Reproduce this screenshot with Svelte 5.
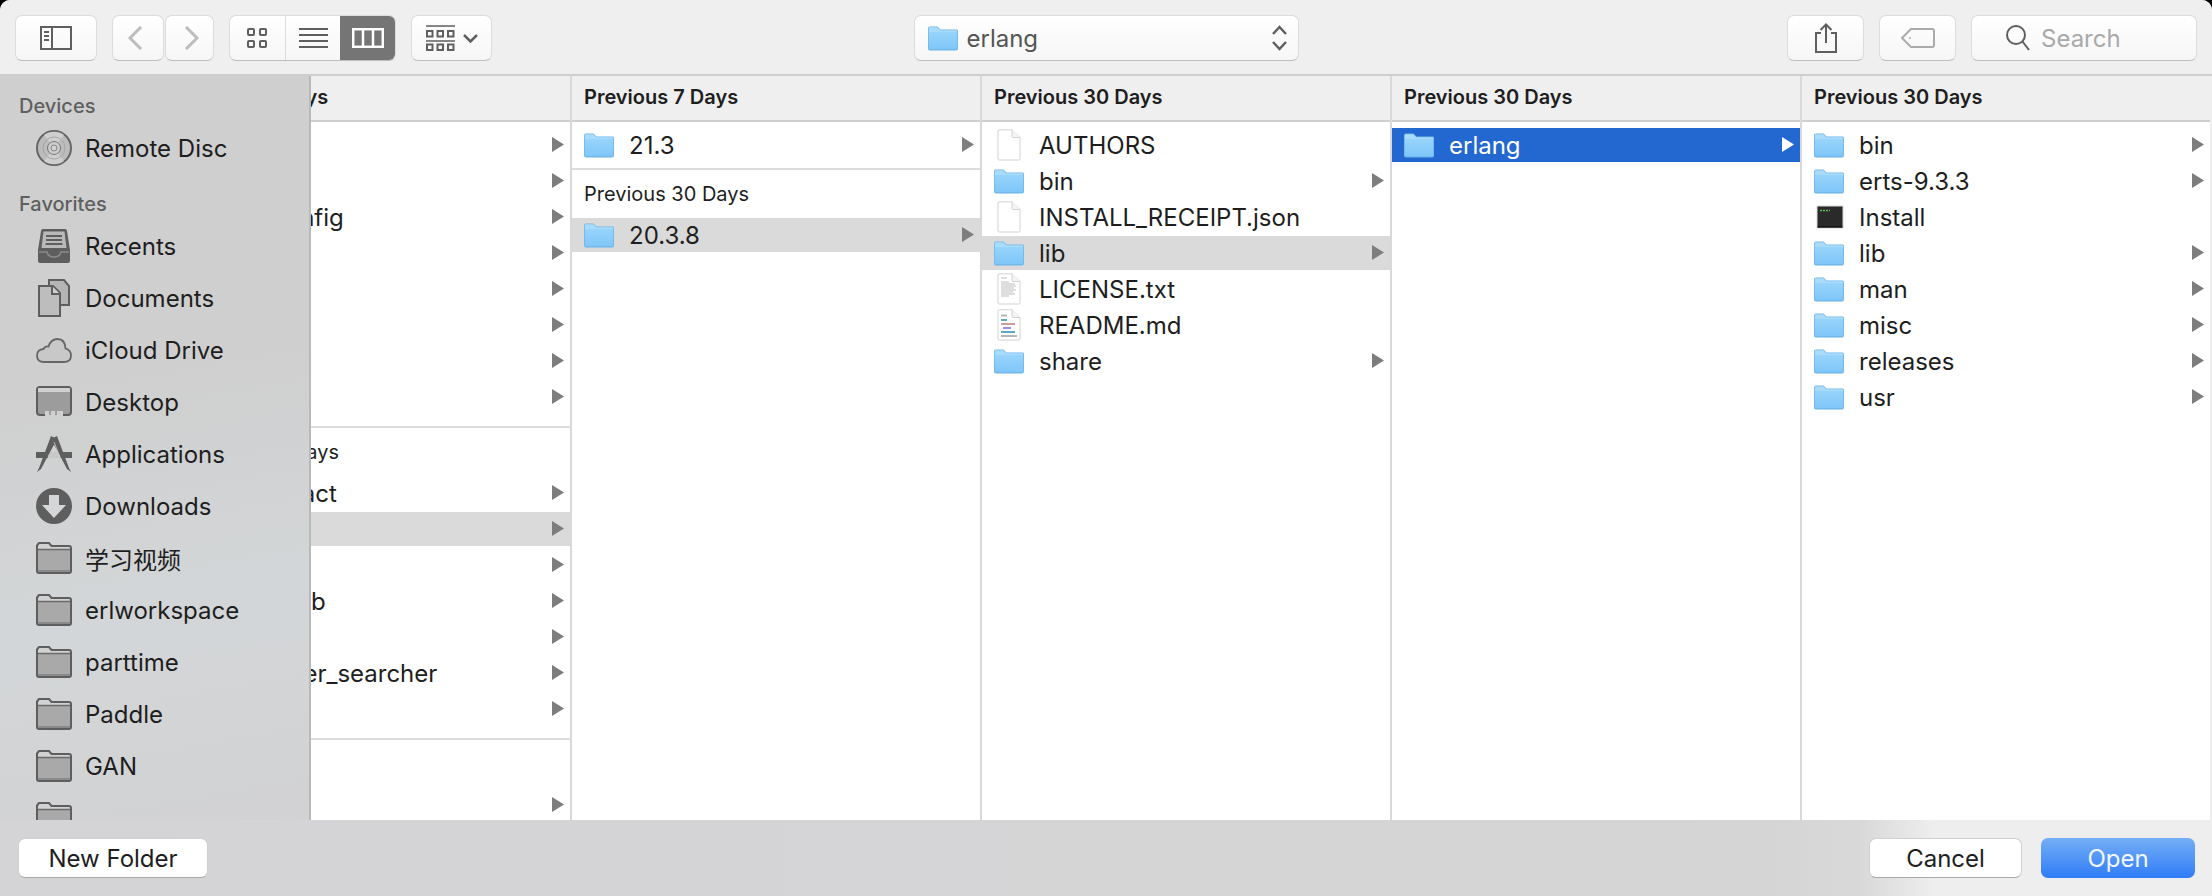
<script>
  // rows of the column browser; arrow is derived from kind === "folder"
  const F = "folder";
  const col1 = [
    { rows: [["ant", F], ["bison", F], ["pkg-config", F], ["cmake", F], ["gcc", F], ["go", F], ["wget", F], ["yarn", F]] },
    { title: "Previous 30 Days", rows: [["git-extract", F], ["erlang", F, "sel"], ["gdb", F], ["rethinkdb", F], ["lua", F], ["the_silver_searcher", F], ["vim", F]] },
    { title: "Earlier", rows: [["zsh", F]] }
  ];
  const col2 = [
    { rows: [["21.3", F]] },
    { title: "Previous 30 Days", rows: [["20.3.8", F, "sel"]] }
  ];
  const col3 = [
    ["AUTHORS", "file"], ["bin", F], ["INSTALL_RECEIPT.json", "file"], ["lib", F, "sel"],
    ["LICENSE.txt", "text"], ["README.md", "readme"], ["share", F]
  ];
  const col5 = [
    ["bin", F], ["erts-9.3.3", F], ["Install", "term"], ["lib", F], ["man", F], ["misc", F], ["releases", F], ["usr", F]
  ];
  const favorites = [
    ["Recents", "recents"], ["Documents", "docs"], ["iCloud Drive", "cloud"], ["Desktop", "desktop"],
    ["Applications", "apps"], ["Downloads", "downloads"], ["学习视频", "gfolder"], ["erlworkspace", "gfolder"],
    ["parttime", "gfolder"], ["Paddle", "gfolder"], ["GAN", "gfolder"], ["", "gfolder"]
  ];
</script>

{#snippet fileIcon(kind)}
  {#if kind === "folder"}
    <svg class="ico" width="30" height="25" viewBox="0 0 30 25">
      <defs>
        <linearGradient id="fb" x1="0" y1="0" x2="0" y2="1"><stop offset="0" stop-color="#97d4fb" /><stop offset="1" stop-color="#7fc6f9" /></linearGradient>
      </defs>
      <path d="M0 2.5Q0 .5 2 .5H9.5L12.5 3.5H29Q30 3.500 30 5V22.500Q30 24.500 28 24.500H2Q0 24.500 0 22.500Z" fill="#6fb6e8" />
      <path d="M.8 2.600Q.8 1.300 2 1.300H9.200L12.200 4.300H29.200V6H.8Z" fill="#a9dcfc" />
      <rect x=".8" y="6" width="28.400" height="17.200" fill="url(#fb)" />
    </svg>
  {:else if kind === "term"}
    <svg class="ico" width="28" height="24" viewBox="0 0 28 24">
      <rect x=".5" y=".5" width="27" height="23" fill="#d8d8d8" />
      <rect x="1.500" y="1.500" width="25" height="21" fill="#2a2a2a" />
      <rect x="1.500" y="21.500" width="25" height="1" fill="#000" />
      <path d="M4 5.500h2M7 5.500h2M10 5.500h2M13 5.500h1" stroke="#62c45a" stroke-width="1.500" />
    </svg>
  {:else}
    <svg class="ico" width="24" height="32" viewBox="0 0 24 32">
      <path d="M1 2Q1 .8 2.200 .8H15L23 8.500V29.800Q23 31 21.800 31H2.200Q1 31 1 29.800Z" fill="#fff" stroke="#d2d2d2" />
      <path d="M15 .8V7.500Q15 8.500 16 8.500H23" fill="#f4f4f4" stroke="#d2d2d2" />
      {#if kind === "text"}
        <path d="M4 5h6M4 9h8M4 11h14M4 13h15M4 15h13M4 17h15M4 19h12M4 21h14M4 23h8" stroke="#bdbdbd" stroke-width="1" />
      {:else if kind === "readme"}
        <path d="M4 6.500h6" stroke="#b5b5b5" stroke-width="2" />
        <path d="M4 11h6" stroke="#5ea9b8" stroke-width="2" />
        <path d="M4 15h14" stroke="#cf9ca2" stroke-width="2" />
        <path d="M6 19h8" stroke="#a78af0" stroke-width="2" />
        <path d="M4 23h14" stroke="#5ea9b8" stroke-width="2" />
        <path d="M4 27h16" stroke="#b5b5b5" stroke-width="2" />
      {/if}
    </svg>
  {/if}
{/snippet}

{#snippet row(name, kind, state)}
  <div class="row" class:sel={state === "sel"} class:active={state === "active"}>
    <span class="row-icon">{@render fileIcon(kind)}</span>
    <span class="row-name">{name}</span>
    {#if kind === "folder"}
      <svg class="arrow" width="12" height="15" viewBox="0 0 12 15"><path d="M0 0L12 7.500L0 15Z" /></svg>
    {/if}
  </div>
{/snippet}

{#snippet sideIcon(kind)}
  <svg width="36" height="40" viewBox="0 0 36 40" class="side-svg">
    {#if kind === "disc"}
      <circle cx="18" cy="20" r="17" fill="#bcbcbc" stroke="#666" stroke-width="2" />
      <path d="M18 20L8 7A17 17 0 0 1 28 7ZM18 20L8 33A17 17 0 0 0 28 33Z" fill="#cfcfcf" />
      <circle cx="18" cy="20" r="11" fill="none" stroke="#a6a6a6" />
      <circle cx="18" cy="20" r="6.500" fill="#cdcdcd" stroke="#777" />
      <circle cx="18" cy="20" r="3" fill="#d2d2d2" stroke="#888" />
    {:else if kind === "recents"}
      <path d="M5 5Q5 3 7 3H29Q31 3 31 5L34 24V35Q34 37 32 37H4Q2 37 2 35V24Z" fill="#5e5e5e" />
      <path d="M7.500 5.500H28.500L30.500 22H5.500Z" fill="#b9b9b9" />
      <path d="M10 10H26M10 14H26M9.500 18H26.500" stroke="#5e5e5e" stroke-width="2" />
      <path d="M3 26H11Q12 31 18 31Q24 31 25 26H33" fill="none" stroke="#8b8b8b" stroke-width="1.500" />
    {:else if kind === "docs"}
      <path d="M19 2H28L33 8V27H13V2Z" fill="#b5b5b5" stroke="#5e5e5e" stroke-width="2" />
      <path d="M3 8H17L24 15V38H3Z" fill="#bdbdbd" stroke="#5e5e5e" stroke-width="2" />
      <path d="M16 8V16H24" fill="#cfcfcf" stroke="#5e5e5e" stroke-width="2" />
    {:else if kind === "cloud"}
      <path d="M8 32Q1 32 1 25.500Q1 19.500 7.500 19Q9 16 12.500 16.500Q15 9 21.500 9Q29 9 29.500 18.500Q35 20 35 25.500Q35 32 28 32Z" fill="#c8c8c8" stroke="#666" stroke-width="1.800" />
    {:else if kind === "desktop"}
      <rect x="1" y="5" width="34" height="28" rx="3" fill="#9c9c9c" stroke="#5e5e5e" stroke-width="2" />
      <path d="M2 6.500Q2 6 3 6H33Q34 6 34 7V10H2Z" fill="#d0d0d0" />
      <path d="M9 34V29H27V34Z" fill="#cfcfcf" />
      <path d="M14 29V33M20 29V33" stroke="#8c8c8c" stroke-width="1.500" />
    {:else if kind === "apps"}
      <path d="M0 18H36V24H0Z" fill="#5e5e5e" />
      <path d="M10 18H26L24 24H12Z" fill="#c8c8c8" />
      <path d="M15 5L21 2L33 34L35 38L31 35Z" fill="#5e5e5e" />
      <path d="M21 5L15 2L3 34L1 38L5 35Z" fill="#5e5e5e" />
      <path d="M18 8L28 33" stroke="#cfcfcf" stroke-width=".8" />
    {:else if kind === "downloads"}
      <circle cx="18" cy="20" r="18" fill="#5e5e5e" />
      <path d="M13 9H23V19H30L18 32L6 19H13Z" fill="#d4d6d8" />
    {:else}
      <path d="M2 6.500Q2 5 3.500 5H13L15.500 8H33Q35 8 35 10V33Q35 35 33 35H3Q1 35 1 33V7.500Z" fill="#d2d2d2" stroke="#5e5e5e" stroke-width="2" />
      <rect x="2" y="12" width="32" height="22" fill="#a9a9a9" />
      <path d="M2 11.500H34" stroke="#6a6a6a" stroke-width="1.500" />
      <rect x="2" y="32" width="32" height="2" fill="#8a8a8a" />
    {/if}
  </svg>
{/snippet}

<div class="window">
  <header class="toolbar">
    <div class="tools-left">
      <div class="btn sidebar-btn">
        <svg width="32" height="24" viewBox="0 0 32 24" fill="none" stroke="#5f5f5f" stroke-width="2">
          <rect x="1" y="1" width="30" height="22" />
          <path d="M12 1V23" />
          <path d="M4 6H9M4 10H9M4 14H9" />
        </svg>
      </div>
      <div class="nav">
        <div class="btn nav-btn back">
          <svg width="16" height="24" viewBox="0 0 16 24" fill="none" stroke="#bdbdbd" stroke-width="3"><path d="M14 1L3 12L14 23" /></svg>
        </div>
        <div class="btn nav-btn fwd">
          <svg width="16" height="24" viewBox="0 0 16 24" fill="none" stroke="#bdbdbd" stroke-width="3"><path d="M2 1L13 12L2 23" /></svg>
        </div>
      </div>
      <div class="btn seg">
        <div class="seg-item">
          <svg width="20" height="20" viewBox="0 0 20 20" fill="none" stroke="#5f5f5f" stroke-width="2">
            <rect x="1" y="1" width="6" height="6" rx="1" /><rect x="13" y="1" width="6" height="6" rx="1" />
            <rect x="1" y="13" width="6" height="6" rx="1" /><rect x="13" y="13" width="6" height="6" rx="1" />
          </svg>
        </div>
        <div class="seg-item">
          <svg width="29" height="20" viewBox="0 0 29 20" fill="none" stroke="#5f5f5f" stroke-width="2"><path d="M0 1H29M0 7H29M0 13H29M0 19H29" /></svg>
        </div>
        <div class="seg-item on">
          <svg width="32" height="20" viewBox="0 0 32 20" fill="none" stroke="#fff" stroke-width="2.500"><rect x="1.200" y="1.200" width="29.600" height="17.600" /><path d="M11 1V19M21 1V19" /></svg>
        </div>
      </div>
      <div class="btn arrange">
        <svg width="29" height="26" viewBox="0 0 29 26" fill="none" stroke="#5f5f5f" stroke-width="2">
          <path d="M0 1H29M0 16H29" stroke-width="1.500" />
          <rect x="1" y="6" width="5.500" height="5.500" /><rect x="11.500" y="6" width="5.500" height="5.500" /><rect x="22" y="6" width="5.500" height="5.500" />
          <rect x="1" y="19.500" width="5.500" height="5.500" /><rect x="11.500" y="19.500" width="5.500" height="5.500" /><rect x="22" y="19.500" width="5.500" height="5.500" />
        </svg>
        <svg width="15" height="9" viewBox="0 0 15 9" fill="none" stroke="#5f5f5f" stroke-width="2.500"><path d="M1 1L7.500 7.500L14 1" /></svg>
      </div>
    </div>

    <div class="btn path">
      {@render fileIcon("folder")}
      <span class="path-name">erlang</span>
      <svg class="updown" width="15" height="26" viewBox="0 0 15 26" fill="none" stroke="#5f5f5f" stroke-width="2.500"><path d="M1 9L7.500 2L14 9M1 17L7.500 24L14 17" /></svg>
    </div>

    <div class="tools-right">
      <div class="btn square">
        <svg width="24" height="30" viewBox="0 0 24 30" fill="none" stroke="#5f5f5f" stroke-width="2">
          <path d="M7 10H2V29H22V10H17" />
          <path d="M12 20V1.500M6.500 7L12 1.500L17.500 7" />
        </svg>
      </div>
      <div class="btn square">
        <svg width="34" height="20" viewBox="0 0 34 20" fill="none" stroke="#ababab" stroke-width="2">
          <path d="M10 1H31Q33 1 33 3V17Q33 19 31 19H10L1 10Z" />
          <circle cx="9" cy="10" r="1" fill="#ababab" stroke="none" />
        </svg>
      </div>
      <div class="btn search">
        <svg width="24" height="26" viewBox="0 0 24 26" fill="none" stroke="#5f5f5f" stroke-width="2"><circle cx="10" cy="10" r="9" /><path d="M16.500 16.500L23 25" /></svg>
        <span>Search</span>
      </div>
    </div>
  </header>

  <div class="middle">
    <div class="browser">
      <section class="col">
        <div class="col-head">Previous 7 Days</div>
        <div class="col-body">
          {#each col1 as group, g}
            {#if group.title}
              <div class="sep" class:sep-wide={true}></div>
              <div class="group-title">{group.title}</div>
            {/if}
            {#each group.rows as r}
              {@render row(r[0], r[1], r[2])}
            {/each}
          {/each}
        </div>
      </section>

      <section class="col">
        <div class="col-head">Previous 7 Days</div>
        <div class="col-body">
          {#each col2 as group}
            {#if group.title}
              <div class="sep"></div>
              <div class="group-title">{group.title}</div>
            {/if}
            {#each group.rows as r}
              {@render row(r[0], r[1], r[2])}
            {/each}
          {/each}
        </div>
      </section>

      <section class="col">
        <div class="col-head">Previous 30 Days</div>
        <div class="col-body">
          {#each col3 as r}
            {@render row(r[0], r[1], r[2])}
          {/each}
        </div>
      </section>

      <section class="col">
        <div class="col-head">Previous 30 Days</div>
        <div class="col-body">
          {@render row("erlang", "folder", "active")}
        </div>
      </section>

      <section class="col last">
        <div class="col-head">Previous 30 Days</div>
        <div class="col-body">
          {#each col5 as r}
            {@render row(r[0], r[1], r[2])}
          {/each}
        </div>
      </section>
    </div>

    <aside class="sidebar">
      <div class="side-title first">Devices</div>
      <div class="side-row">
        {@render sideIcon("disc")}
        <span>Remote Disc</span>
      </div>
      <div class="side-title">Favorites</div>
      {#each favorites as f}
        <div class="side-row">
          {@render sideIcon(f[1])}
          <span>{f[0]}</span>
        </div>
      {/each}
    </aside>
  </div>

  <footer class="bottom">
    <button class="dlg new">New Folder</button>
    <div class="bottom-right">
      <button class="dlg cancel">Cancel</button>
      <button class="dlg open">Open</button>
    </div>
  </footer>
</div>

<style>
  :global(body) {
    margin: 0;
    background: #000;
  }

  .window {
    width: 2212px;
    height: 896px;
    display: flex;
    flex-direction: column;
    overflow: hidden;
    border-radius: 10px 10px 0 0;
    background: #eeeeee;
    font-family: Inter, "Noto Sans CJK SC", sans-serif;
    font-size: 24px;
    color: #1e1e1e;
  }

  /* toolbar */
  .toolbar {
    box-sizing: border-box;
    flex: none;
    height: 76px;
    padding: 15px 15px 0;
    display: grid;
    grid-template-columns: 1fr auto 1fr;
    align-items: start;
    background: #efefef;
    border-bottom: 2px solid #cdcdcd;
  }

  .tools-left,
  .tools-right {
    display: flex;
    gap: 15px;
  }

  .tools-right {
    justify-content: flex-end;
  }

  .btn {
    box-sizing: border-box;
    height: 46px;
    display: flex;
    align-items: center;
    justify-content: center;
    border-radius: 7px;
    background: linear-gradient(#ffffff, #f6f6f6);
    border: 1px solid #dcdcdc;
    border-bottom-color: #bdbdbd;
  }

  .sidebar-btn {
    width: 82px;
  }

  .nav {
    display: flex;
    gap: 1px;
  }

  .nav-btn {
    width: 52px;
  }

  .back {
    justify-content: flex-start;
    padding-left: 14px;
  }

  .fwd {
    width: 49px;
    justify-content: flex-start;
    padding-left: 18px;
  }

  .seg {
    overflow: hidden;
    width: 167px;
  }

  .seg-item {
    flex: 1;
    height: 100%;
    display: flex;
    align-items: center;
    justify-content: center;
    border-left: 1px solid #dcdcdc;
  }

  .seg-item:first-child {
    border-left: none;
  }

  .seg-item.on {
    background: #757575;
    border-left: none;
  }

  .arrange {
    width: 81px;
    gap: 8px;
  }

  .path {
    width: 385px;
    padding: 0 11px 0 13px;
    gap: 9px;
    justify-content: flex-start;
  }

  .path-name {
    color: #555;
    flex: 1;
  }

  .square {
    width: 77px;
  }

  .search {
    width: 226px;
    gap: 11px;
    justify-content: flex-start;
    padding-left: 34px;
    color: #a9a9a9;
  }

  /* middle */
  .middle {
    position: relative;
    flex: 1;
    min-height: 0;
    overflow: hidden;
  }

  .browser {
    height: 100%;
    margin-left: 162px;
    width: 2048px;
    display: flex;
    background: #fff;
  }

  .col {
    box-sizing: border-box;
    width: 410px;
    flex: none;
    border-right: 2px solid #d9d9d9;
    display: flex;
    flex-direction: column;
    min-width: 0;
  }

  .col.last {
    width: 408px;
    border-right: none;
  }

  .col-head {
    box-sizing: border-box;
    flex: none;
    height: 46px;
    padding: 8px 0 0 12px;
    line-height: 26px;
    font-size: 20px;
    font-weight: 600;
    background: #efefef;
    border-bottom: 2px solid #cfcfcf;
  }

  .col-body {
    padding-top: 6px;
    display: flex;
    flex-direction: column;
    gap: 2px;
  }

  .row {
    flex: none;
    height: 34px;
    display: flex;
    align-items: center;
    position: relative;
    white-space: nowrap;
  }

  .row.sel {
    background: #dadada;
  }

  .row.active {
    background: #2368d0;
    color: #fff;
  }

  .row-icon {
    flex: none;
    width: 57px;
    padding-left: 12px;
    box-sizing: border-box;
    display: flex;
    align-items: center;
  }

  .ico {
    display: block;
    flex: none;
  }

  svg.ico[width="24"] {
    margin-left: 3px;
  }

  svg.ico[width="28"] {
    margin-left: 2px;
  }

  .row-name {
    flex: 1;
  }

  .arrow {
    position: absolute;
    right: 6px;
    top: 9px;
    fill: #7d7d7d;
  }

  .row.active .arrow {
    fill: #fff;
  }

  .sep {
    height: 2px;
    margin-top: 4px;
    background: #dcdcdc;
  }

  .sep-wide {
    margin-top: 10px;
  }

  .group-title {
    height: 44px;
    padding-left: 12px;
    line-height: 44px;
    font-size: 20px;
  }

  /* sidebar floats over the first column */
  .sidebar {
    position: absolute;
    left: 0;
    top: 0;
    bottom: 0;
    width: 311px;
    box-sizing: border-box;
    overflow: hidden;
    border-right: 2px solid #b9b9b9;
    background: linear-gradient(170deg, #cfcfcf 0%, #cfcfcf 40%, #d3d6d8 70%, #d2d2d4 100%);
  }

  .side-title {
    height: 32px;
    margin: 14px 0 0 19px;
    line-height: 32px;
    font-size: 20px;
    font-weight: 500;
    color: #5f5f5f;
  }

  .side-title.first {
    margin-top: 14px;
  }

  .side-row {
    height: 52px;
    display: flex;
    align-items: center;
    padding-left: 36px;
    gap: 13px;
    white-space: nowrap;
  }

  .side-svg {
    flex: none;
  }

  /* bottom bar */
  .bottom {
    box-sizing: border-box;
    flex: none;
    height: 76px;
    padding: 0 17px 0 18px;
    display: flex;
    align-items: center;
    justify-content: space-between;
    background: linear-gradient(90deg, #d4d3d5 0%, #d5d5d6 80%, #d8d8d8 84%, #eeeeee 87.500%);
  }

  .bottom-right {
    display: flex;
    gap: 19px;
  }

  .dlg {
    box-sizing: border-box;
    height: 40px;
    padding: 0;
    border-radius: 7px;
    border: 1px solid #cfcfcf;
    border-bottom-color: #a9a9a9;
    background: #fff;
    font-family: inherit;
    font-size: 24px;
    color: #1e1e1e;
  }

  .new {
    width: 190px;
  }

  .cancel {
    width: 153px;
  }

  .open {
    width: 154px;
    border: none;
    background: linear-gradient(#75aef6, #2f7cf7);
    color: #f2f7ff;
  }
</style>
